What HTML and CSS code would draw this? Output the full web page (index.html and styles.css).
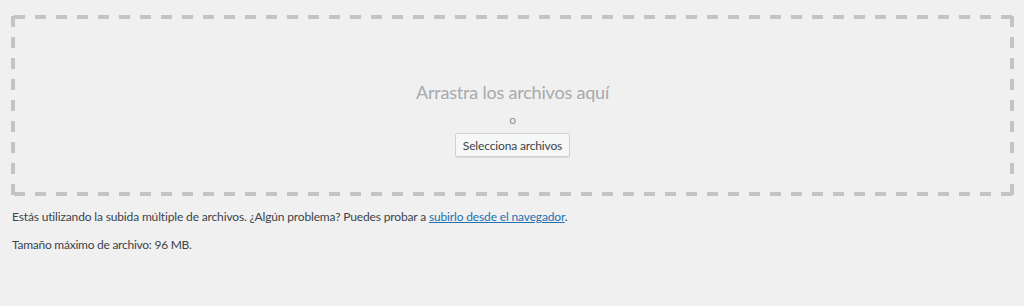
FILE: index.html
```html
<!DOCTYPE html>
<html lang="es">
<head>
    <meta charset="UTF-8">
    <title>Subir nuevo medio</title>
    <link rel="stylesheet" href="styles.css">
</head>
<body>
    <div class="uploader">
        <div class="drag-drop-area">
            <div class="drag-drop-inside">
                <p class="drag-drop-info">Arrastra los archivos aquí</p>
                <p class="drag-drop-or">o</p>
                <p class="drag-drop-buttons">
                    <button type="button" class="button">Selecciona archivos</button>
                </p>
            </div>
        </div>
        <p class="upload-flash-bypass">Estás utilizando la subida múltiple de archivos. ¿Algún problema? Puedes probar a <a href="#">subirlo desde el navegador</a>.</p>
        <p class="max-upload-size">Tamaño máximo de archivo: 96 MB.</p>
    </div>
</body>
</html>
```

FILE: styles.css
```css
* {
    margin: 0;
    padding: 0;
    box-sizing: border-box;
}

body {
    background: #f0f0f1;
    color: #3c434a;
    font-family: 'Lato', sans-serif;
    font-size: 12px;
    letter-spacing: -0.15px;
    line-height: 20px;
    height: 306px;
    overflow: hidden;
}

.uploader {
    padding: 15px 10px 0 11px;
}

/* dashed frame drawn with gradients so the dash rhythm matches */
.drag-drop-area {
    height: 181px;
    background:
        linear-gradient(to right, #c3c4c7 11px, transparent 11px) 3px 0 / 21px 4px repeat-x,
        linear-gradient(to right, #c3c4c7 11px, transparent 11px) 3px 100% / 21px 4px repeat-x,
        linear-gradient(to bottom, #c3c4c7 11px, transparent 11px) 0 1px / 4px 21px repeat-y,
        linear-gradient(to bottom, #c3c4c7 11px, transparent 11px) 100% 1px / 4px 21px repeat-y;
}

.drag-drop-inside {
    display: flex;
    flex-direction: column;
    align-items: center;
    padding-top: 63px;
}

.drag-drop-info {
    font-size: 18px;
    letter-spacing: -0.2px;
    line-height: 28px;
    color: #a7aaad;
}

.drag-drop-or {
    margin-top: 7px;
    line-height: 14px;
    color: #8c8f94;
}

.drag-drop-buttons {
    margin-top: 6px;
}

.button {
    font-family: inherit;
    font-size: 12px;
    letter-spacing: -0.15px;
    color: #3c434a;
    background: #f6f7f7;
    border: 1px solid #d0d1d3;
    border-radius: 2px;
    width: 115px;
    height: 24px;
    box-shadow: 0 1px 0 #dcdcde;
    cursor: pointer;
}

.upload-flash-bypass {
    margin-top: 11px;
    padding-left: 1px;
}

.upload-flash-bypass a {
    color: #2271b1;
}

.max-upload-size {
    margin-top: 8px;
    padding-left: 1px;
    letter-spacing: -0.25px;
}
```
